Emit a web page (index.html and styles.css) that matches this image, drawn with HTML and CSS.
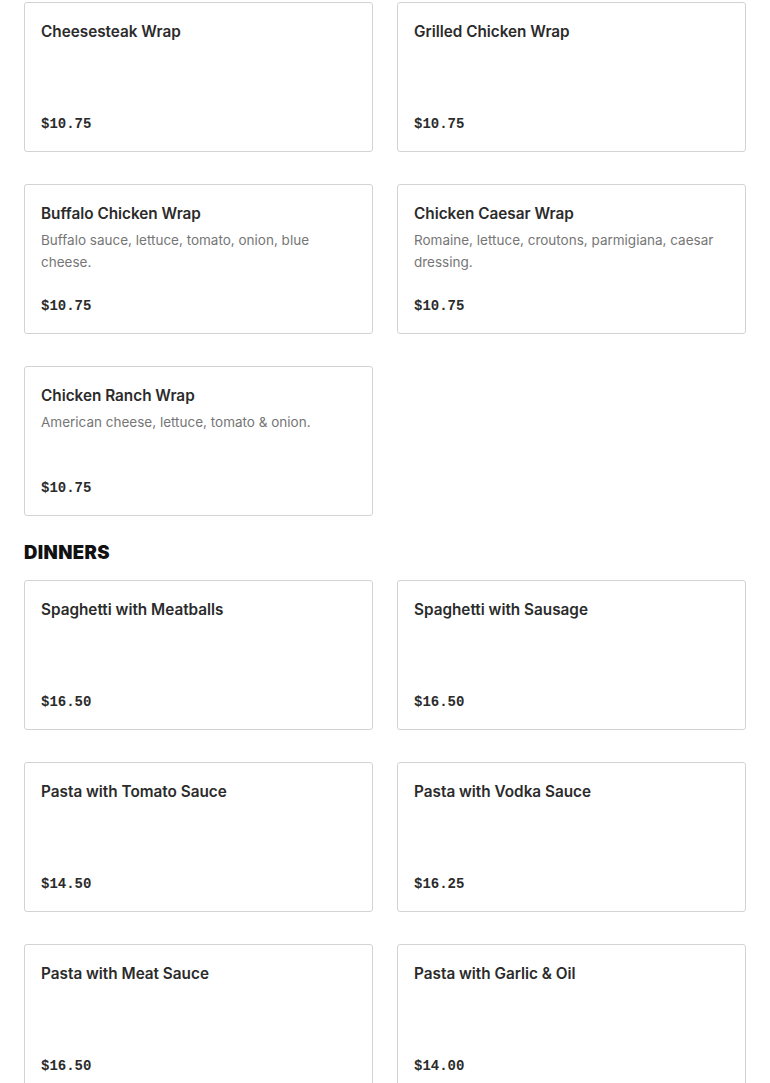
FILE: index.html
```html
<!DOCTYPE html>
<html lang="en">
<head>
<meta charset="utf-8">
<title>Menu</title>
<link rel="stylesheet" href="styles.css">
</head>
<body>
<main class="menu">
  <section class="section">
    <div class="grid">
      <div class="card"><div class="title">Cheesesteak Wrap</div><div class="price">$10.75</div></div>
      <div class="card"><div class="title">Grilled Chicken Wrap</div><div class="price">$10.75</div></div>
      <div class="card"><div class="title">Buffalo Chicken Wrap</div><div class="desc">Buffalo sauce, lettuce, tomato, onion, blue cheese.</div><div class="price">$10.75</div></div>
      <div class="card"><div class="title">Chicken Caesar Wrap</div><div class="desc">Romaine, lettuce, croutons, parmigiana, caesar dressing.</div><div class="price">$10.75</div></div>
      <div class="card"><div class="title">Chicken Ranch Wrap</div><div class="desc">American cheese, lettuce, tomato &amp; onion.</div><div class="price">$10.75</div></div>
    </div>
  </section>
  <section class="section">
    <h2 class="heading">DINNERS</h2>
    <div class="grid">
      <div class="card"><div class="title">Spaghetti with Meatballs</div><div class="price">$16.50</div></div>
      <div class="card"><div class="title">Spaghetti with Sausage</div><div class="price">$16.50</div></div>
      <div class="card"><div class="title">Pasta with Tomato Sauce</div><div class="price">$14.50</div></div>
      <div class="card"><div class="title">Pasta with Vodka Sauce</div><div class="price">$16.25</div></div>
      <div class="card"><div class="title">Pasta with Meat Sauce</div><div class="price">$16.50</div></div>
      <div class="card"><div class="title">Pasta with Garlic &amp; Oil</div><div class="price">$14.00</div></div>
    </div>
  </section>
</main>
</body>
</html>
```
FILE: styles.css
```css
html, body {
  margin: 0;
  padding: 0;
  background: #ffffff;
}
body {
  font-family: Inter, "Noto Sans", sans-serif;
  color: #2b2b2b;
}
.menu {
  padding: 2px 24px 0;
}
.grid {
  display: grid;
  grid-template-columns: 1fr 1fr;
  column-gap: 24px;
  row-gap: 32px;
}
.card {
  box-sizing: border-box;
  height: 150px;
  border: 1px solid #d3d3d3;
  border-radius: 3px;
  padding: 16px;
  display: flex;
  flex-direction: column;
}
.title {
  margin-top: 1px;
  font-size: 15.3px;
  font-weight: 600;
  line-height: 24px;
  color: #2b2b2b;
}
.desc {
  margin-top: 3px;
  font-size: 13.5px;
  line-height: 22px;
  color: #767676;
}
.price {
  margin-top: auto;
  font-family: "Liberation Mono", "DejaVu Sans Mono", monospace;
  font-weight: 700;
  font-size: 14px;
  line-height: 21px;
  color: #2b2b2b;
}
.heading {
  margin: 24px 0 16px;
  font-size: 18.5px;
  font-weight: 900;
  letter-spacing: 0.4px;
  line-height: 24px;
  color: #111111;
}
```
